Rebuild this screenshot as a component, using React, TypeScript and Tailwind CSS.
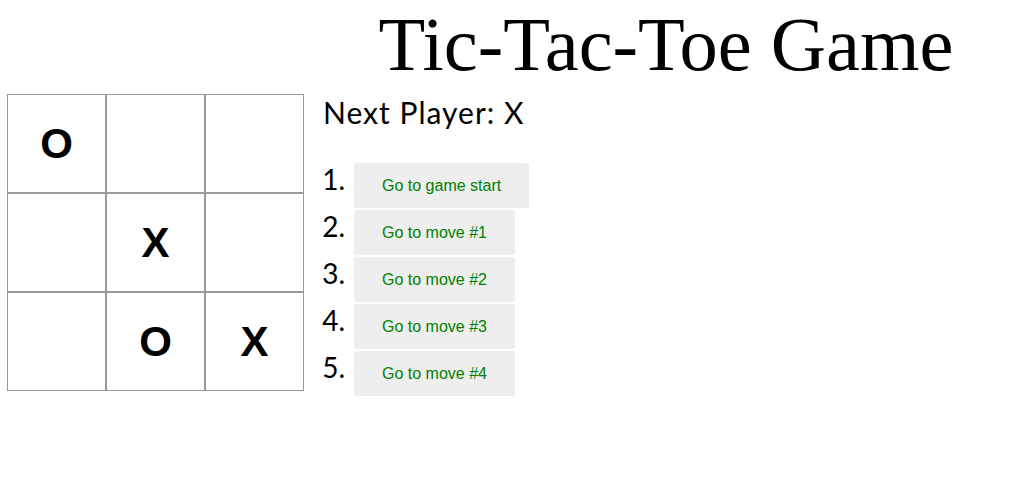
const squares = ["O", null, null, null, "X", null, null, "O", "X"];

const moves = ["Go to game start", "Go to move #1", "Go to move #2", "Go to move #3", "Go to move #4"];

function Square({ value }: { value: string | null }) {
  return (
    <div className="w-[99px] h-[99px] border border-[#999999] flex items-center justify-center bg-white">
      <span className="font-['Liberation_Sans',Arial,sans-serif] font-bold text-[42px] leading-none text-black">
        {value}
      </span>
    </div>
  );
}

export default function App() {
  return (
    <div className="w-[1012px] h-[483px] bg-white flex overflow-hidden">
      <div className="w-[320px] shrink-0 pl-[7px] pt-[94px]">
        <div className="grid grid-cols-3 w-[297px]">
          {squares.map((v, i) => (
            <Square key={i} value={v} />
          ))}
        </div>
      </div>

      <div className="flex-1 flex flex-col">
        <h1 className="mt-[7px] text-center font-['Liberation_Serif','Times_New_Roman',serif] font-normal text-[76.5px] leading-[75px] text-black">
          Tic-Tac-Toe Game
        </h1>
        <div className="mt-[15px] pl-[3px] font-['Lato',sans-serif] font-normal tracking-[1px] text-[30px] leading-[30px] text-black">
          Next Player: X
        </div>
        <ol className="mt-[36px] flex flex-col gap-[2px]">
          {moves.map((label, i) => (
            <li key={i} className="flex items-start">
              <span className="w-[34px] pr-[9px] mt-[2px] text-right font-['Lato',sans-serif] font-normal text-[28px] leading-[28px] text-black">
                {i + 1}.
              </span>
              <button className="h-[45px] px-[28px] rounded-[2px] bg-[#eeeeee] text-[#008000] font-['Liberation_Sans',Arial,sans-serif] text-[16px]">
                {label}
              </button>
            </li>
          ))}
        </ol>
      </div>
    </div>
  );
}
